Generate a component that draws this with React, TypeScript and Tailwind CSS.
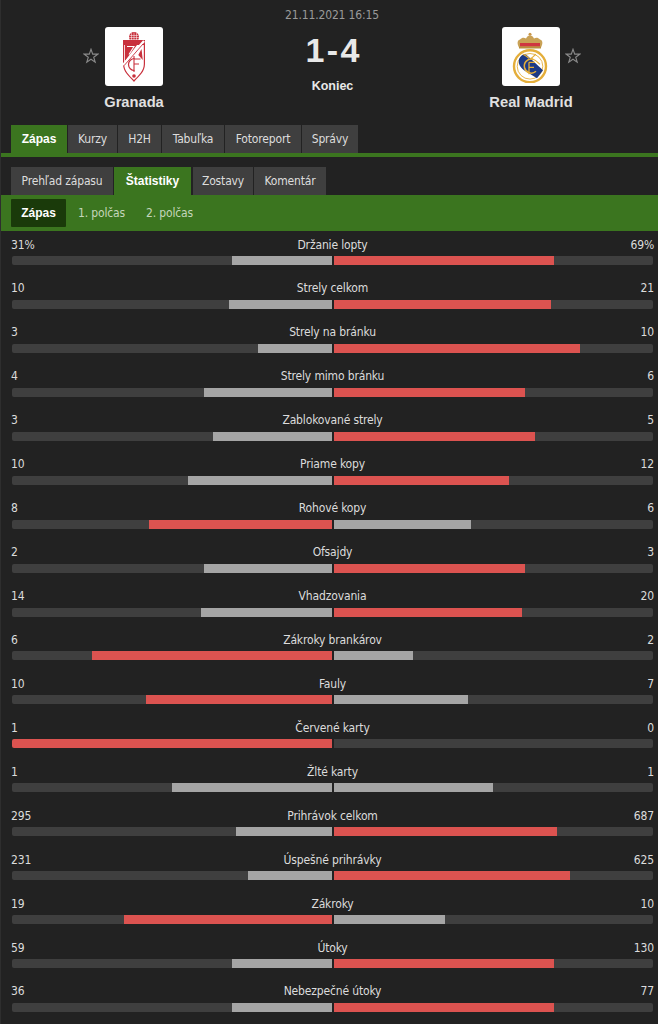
import React from "react";

const stats: [string, string, string][] = [
  ["31%", "Držanie lopty", "69%"],
  ["10", "Strely celkom", "21"],
  ["3", "Strely na bránku", "10"],
  ["4", "Strely mimo bránku", "6"],
  ["3", "Zablokované strely", "5"],
  ["10", "Priame kopy", "12"],
  ["8", "Rohové kopy", "6"],
  ["2", "Ofsajdy", "3"],
  ["14", "Vhadzovania", "20"],
  ["6", "Zákroky brankárov", "2"],
  ["10", "Fauly", "7"],
  ["1", "Červené karty", "0"],
  ["1", "Žlté karty", "1"],
  ["295", "Prihrávok celkom", "687"],
  ["231", "Úspešné prihrávky", "625"],
  ["19", "Zákroky", "10"],
  ["59", "Útoky", "130"],
  ["36", "Nebezpečné útoky", "77"],
];

function GranadaCrest() {
  return (
    <svg width="24" height="50" viewBox="0 0 24 50">
      <circle cx="12" cy="5" r="5" fill="#c8303c" />
      <path d="M7.5 3.5h9M7 5.5h10M8 7.5h8M12 0.5v8M9.5 1v7M14.5 1v7" stroke="#fff" strokeWidth="0.5" />
      <path d="M1 8h22v24c0 8-6 12-11 18C7 44 1 40 1 32Z" fill="#c8303c" />
      <path d="M2.2 13h19.6v19c0 7-5 11-9.8 16C7 43 2.2 39 2.2 32Z" fill="#fff" />
      <path d="M3 13h12L3 29Z" fill="#c8303c" />
      <path d="M5 14.5h7l-5 8" fill="none" stroke="#fff" strokeWidth="1.1" />
      <path d="M19.5 17l1.3 11-4.5-5Z" fill="#c8303c" />
      <path d="M1 33 22 9" stroke="#fff" strokeWidth="2.4" />
      <path d="M2.2 33.5 21 12" stroke="#c8303c" strokeWidth="0.9" />
      <path d="M12.5 26.5a6 6 0 1 0 0 12" fill="none" stroke="#c8303c" strokeWidth="1.2" />
      <path d="M12 24v16M12 27h6.5M12 32h5" fill="none" stroke="#c8303c" strokeWidth="1.1" />
      <circle cx="12" cy="44" r="1.8" fill="#c8303c" />
    </svg>
  );
}

function MadridCrest() {
  return (
    <svg width="38" height="52" viewBox="1 0 38 52">
      <g transform="translate(0 1.5)">
        <path d="M8 15C6 11 6 8 9 7c2-2 4-2 6-1 1-2 2-3 4-3s3 1 4 3c2-1 4-1 6 1 3 1 3 4 1 8Z" fill="#c9a155" />
        <path d="M9 10.5h20v3.5H9Z" fill="#cf3640" />
        <circle cx="19" cy="1.7" r="1.5" fill="#c9974a" />
        <path d="M8 14h22v2H8Z" fill="#b98e3f" />
      </g>
      <g transform="translate(0 1.3)">
        <circle cx="19" cy="34" r="16" fill="#fff" stroke="#e4ae3a" strokeWidth="2.4" />
        <circle cx="19" cy="34" r="12.8" fill="none" stroke="#e4ae3a" strokeWidth="0.9" />
        <path d="M8 27c2-5 6-6 9-3l15 14-6 8-13-8c-4-3-6-7-5-11Z" fill="#1c3a85" />
        <path d="M25 22c-2 1-3 3-5 4 3 1 6 3 9 6" fill="none" stroke="#e4ae3a" strokeWidth="1.2" />
        <path d="M12 22c2 1 4 2 6 4" fill="none" stroke="#e4ae3a" strokeWidth="1.2" />
        <path d="M25 39a7 7 0 1 1-3-12" fill="none" stroke="#e4ae3a" strokeWidth="1.5" />
        <path d="M18 30h6M18 30v12M18 35h5" fill="none" stroke="#e4ae3a" strokeWidth="1.3" />
      </g>
    </svg>
  );
}

function Star() {
  return (
    <svg width="16" height="16" viewBox="0 0 16 16" className="shrink-0">
      <path d="M8 1.2l1.7 4.9h5.1l-4.1 3.1 1.5 5-4.2-3-4.2 3 1.5-5-4.1-3.1h5.1Z" fill="none" stroke="#8a8a8a" strokeWidth="1.1" />
    </svg>
  );
}

function Team({ name, star, crest }: { name: string; star: "left" | "right"; crest: React.ReactNode }) {
  return (
    <div className="flex w-[130px] flex-col items-center">
      <div className="relative flex h-[59px] w-[58px] items-center justify-center rounded-[3px] bg-white">
        {crest}
        <div className={star === "left" ? "absolute left-[-22px] top-[21px]" : "absolute right-[-21px] top-[21px]"}>
          <Star />
        </div>
      </div>
      <div className="mt-[7px] font-['Liberation_Sans',sans-serif] text-[14.7px] leading-[18px] font-bold tracking-normal text-[#e0e0e0]">{name}</div>
    </div>
  );
}

function Tab({ label, active, w, ml = "" }: { label: string; active?: boolean; w: string; ml?: string }) {
  return (
    <div
      className={`${w} ${ml} flex h-[28px] items-center justify-center text-[12px] ${
        active ? "bg-[#3b751f] font-['Liberation_Sans',sans-serif] font-bold tracking-normal text-white" : "bg-[#3f3f3f] text-[#dddddd]"
      }`}
    >
      {label}
    </div>
  );
}

function Row({ a, label, b }: { a: string; label: string; b: string }) {
  const na = parseFloat(a);
  const nb = parseFloat(b);
  const l = Math.floor((na / (na + nb)) * 100);
  const r = 100 - l;
  const lRed = l > r;
  const rRed = r > l;
  return (
    <div className="h-[43.95px] pl-[10px] pr-[4px]">
      <div className="grid h-[25px] grid-cols-[1fr_auto_1fr] items-center pt-[2px] text-[12px] text-[#dcdcdc]">
        <span>{a}</span>
        <span>{label}</span>
        <span className="text-right">{b}</span>
      </div>
      <div className="flex gap-[2px] px-[1px]">
        <div className="flex h-[9px] flex-1 justify-end overflow-hidden rounded-l-[2px] bg-[#3f3f3f]">
          <div className={lRed ? "h-full bg-[#dc5350]" : "h-full bg-[#a5a5a5]"} style={{ width: `${l}%` }} />
        </div>
        <div className="flex h-[9px] flex-1 overflow-hidden rounded-r-[2px] bg-[#3f3f3f]">
          <div className={rRed ? "h-full bg-[#dc5350]" : "h-full bg-[#a5a5a5]"} style={{ width: `${r}%` }} />
        </div>
      </div>
    </div>
  );
}

export default function App() {
  return (
    <div className="h-[1024px] w-[658px] overflow-hidden border-l border-[#2e2e2e] bg-[#222222] font-['DejaVu_Sans_Condensed','DejaVu_Sans',sans-serif] tracking-[-0.15px]">
      <div className="pl-[5px] pt-[8px] text-center text-[12px] leading-[14px] text-[#9a9a9a]">21.11.2021 16:15</div>
      <div className="flex justify-between pl-[68px] pr-[62px] pt-[5px]">
        <Team name="Granada" star="left" crest={<GranadaCrest />} />
        <div className="flex flex-col items-center font-['Liberation_Sans',sans-serif] font-bold tracking-normal text-[#e8e8e8]">
          <div className="pt-[3px] text-[34px] leading-[40px] [word-spacing:-7px]">1 - 4</div>
          <div className="mt-[8px] text-[12.5px] leading-[16px]">Koniec</div>
        </div>
        <Team name="Real Madrid" star="right" crest={<MadridCrest />} />
      </div>
      <div className="mt-[14px] flex gap-[1px] pl-[10px]">
        <Tab label="Zápas" active w="w-[56px]" />
        <Tab label="Kurzy" w="w-[49px]" />
        <Tab label="H2H" w="w-[43px]" />
        <Tab label="Tabuľka" w="w-[62px]" />
        <Tab label="Fotoreport" w="w-[76px]" />
        <Tab label="Správy" w="w-[56px]" />
      </div>
      <div className="h-[4px] bg-[#3b751f]" />
      <div className="mt-[10px] flex gap-[1px] pl-[10px]">
        <Tab label="Prehľad zápasu" w="w-[102px]" />
        <Tab label="Štatistiky" active w="w-[77px]" />
        <Tab label="Zostavy" w="w-[60px]" ml="ml-[1px]" />
        <Tab label="Komentár" w="w-[72px]" />
      </div>
      <div className="flex h-[36px] items-center bg-[#3b751f] pl-[10px] text-[12px] text-[#c4d6bb]">
        <div className="flex h-[28px] w-[55px] items-center justify-center rounded-[1px] bg-[#1a3a0a] font-['Liberation_Sans',sans-serif] font-bold tracking-normal text-white">Zápas</div>
        <span className="ml-[12px]">1. polčas</span>
        <span className="ml-[21px]">2. polčas</span>
      </div>
      <div>
        {stats.map(([a, label, b]) => (
          <Row key={label} a={a} label={label} b={b} />
        ))}
      </div>
    </div>
  );
}
